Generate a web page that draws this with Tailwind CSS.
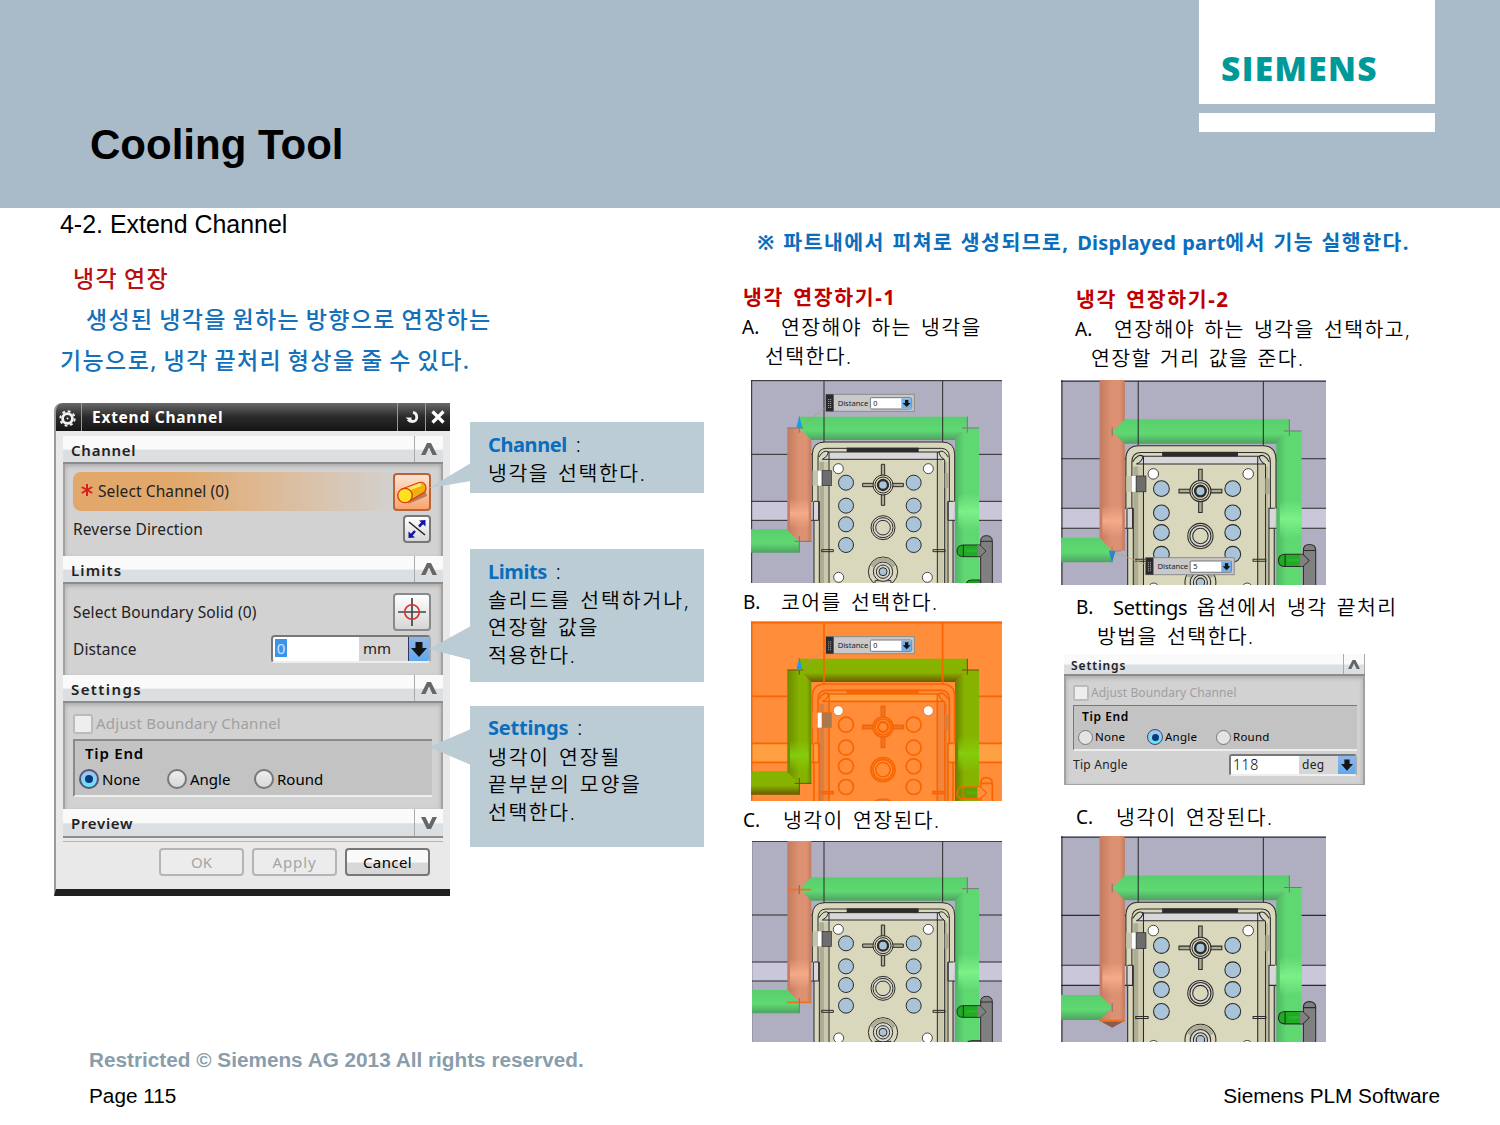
<!DOCTYPE html>
<html lang="ko">
<head>
    <meta charset="UTF-8">
    <meta name="viewport" content="width=device-width, initial-scale=1.0">
    <title>Cooling Tool - Extend Channel</title>
    <script src="https://cdn.jsdelivr.net/npm/@tailwindcss/browser@4"></script>
</head>
<body class="w-[1500px] h-[1125px] overflow-hidden bg-white text-black flex flex-col font-['Noto_Sans','Noto_Sans_CJK_KR',sans-serif]">

    <!-- Header -->
    <header class="h-[208px] shrink-0 bg-[#a9bbc8] flex justify-between pl-[90px] pr-[65px]">
        <h1 class="pt-[121px] text-[42px] leading-[48px] font-bold font-['Liberation_Sans',sans-serif]">Cooling Tool</h1>
        <div class="w-[236px] flex flex-col gap-[9px]">
            <div class="h-[104px] bg-white pl-[22px] pt-[48px] text-[#009999] text-[33.5px] leading-[40px] font-extrabold tracking-[1.35px] font-['Open_Sans',sans-serif] whitespace-nowrap">SIEMENS</div>
            <div class="h-[19px] bg-white"></div>
        </div>
    </header>

    <main class="h-[838px] shrink-0 flex">
        <!-- Left half: description, dialog, callouts -->
        <section class="w-[742px] shrink-0 whitespace-nowrap">
            <h2 class="pl-[60px] h-[34px] leading-[33px] text-[24.95px] font-['Liberation_Sans',sans-serif]">4-2. Extend Channel</h2>
            <p class="mt-[16px] pl-[73px] h-[41px] leading-[41px] text-[23px] tracking-[1.3px] [word-spacing:-1.2px] font-medium text-[#b80f0f]">냉각 연장</p>
            <p class="pl-[86px] h-[41px] leading-[41px] text-[23px] tracking-[1.3px] [word-spacing:-1.4px] font-medium text-[#1470b8]">생성된 냉각을 원하는 방향으로 연장하는</p>
            <p class="pl-[60px] h-[41px] leading-[41px] text-[23px] tracking-[1.4px] [word-spacing:-1.7px] font-medium text-[#1470b8]">기능으로, 냉각 끝처리 형상을 줄 수 있다.</p>

            <div class="mt-[22px] pl-[54px] flex gap-5">
                <!-- Extend Channel dialog -->
                <div class="w-[396px] h-[493px] shrink-0 rounded-tl-lg bg-[#e9e9e9] border-l-2 border-l-[#9a9a9a] border-b-[7px] border-b-[#1f2021] text-[15px] text-[#222] overflow-hidden">
                    <div class="h-[28px] -ml-0.5 rounded-tl-lg bg-linear-to-b from-[#6a6a6a] via-[#2a2a2a] to-[#151515] flex items-center text-white">
                        <div class="w-[28px] h-full flex items-center justify-center border-r border-[#999]">
                            <svg class="w-[17px] h-[17px] mt-0.5" viewBox="0 0 17 17" fill="none" stroke="#f2f2f2">
                                <circle cx="8.5" cy="8.5" r="4.9" stroke-width="2.8"/>
                                <circle cx="8.5" cy="8.5" r="7.2" stroke-width="1.900" stroke-dasharray="2.83 2.83"/>
                                <circle cx="8.5" cy="8.5" r="1" fill="#f2f2f2" stroke="none"/>
                            </svg>
                        </div>
                        <div class="pl-[10px] flex-1 leading-[26px] text-[15.5px] font-bold tracking-[0.75px]">Extend Channel</div>
                        <div class="w-[28px] h-full flex items-center justify-center border-l border-[#999]">
                            <svg class="w-4 h-4" viewBox="0 0 16 16" fill="none" stroke="#f2f2f2"><path d="M9 3.500c5 .8 5 9 0 9-2.500 0-4-.8-5-2" stroke-width="2.800"/><path d="M1.500 8.500h6v5z" fill="#f2f2f2" stroke="none"/></svg>
                        </div>
                        <div class="w-[25px] h-full flex items-center justify-center border-l border-[#999]">
                            <svg class="w-[14px] h-[14px]" viewBox="0 0 14 14" stroke="#fff" stroke-width="3.2"><path d="M1.500 1.500L12.500 12.500M12.500 1.500L1.500 12.500"/></svg>
                        </div>
                    </div>

                    <div class="mt-[5px] ml-[7px] w-[380px]">
                        <!-- Channel -->
                        <div class="h-[28px] border-b-2 border-[#8c8c8c] bg-linear-to-b from-[#fafafa] from-50% to-[#dcdfe1] to-55% flex items-center font-semibold">
                            <span class="pl-[8px] pt-[2px] flex-1 tracking-[0.75px]">Channel</span>
                            <span class="w-[29px] h-full border-l border-[#aaa] flex items-center justify-center"><svg class="w-[16px] h-[12px]" viewBox="0 0 16 12" fill="#666"><path d="M0 12L6 0h4L16 12h-4.500L8 4.500 4.500 12z"/></svg></span>
                        </div>
                        <div class="h-[92px] bg-[#d2d2d2] border-x-2 border-[#a2a2a2] shadow-[inset_0_2px_4px_#aaa] pl-[8px] pr-[10px] pt-[8px]">
                            <div class="h-[39px] flex items-center rounded-l-lg bg-linear-to-r from-[#e2a86b] from-30% to-[#d2d2d2] to-92%">
                                <svg class="ml-[8px] w-[12px] h-[12px] -mt-[4px]" viewBox="0 0 12 12" stroke="#d8201a" stroke-width="2"><path d="M6 0V12M.8 3L11.200 9M11.200 3L.8 9"/></svg>
                                <span class="pl-[5px] flex-1 text-[15.5px] tracking-[0.1px]">Select Channel (0)</span>
                                <span class="w-[38px] h-[38px] rounded-[4px] border-2 border-[#b8633a] bg-linear-to-b from-[#fbe3d3] to-[#f7a56d] flex items-center justify-center">
                                    <svg class="w-[32px] h-[32px]" viewBox="0 0 32 32">
                                        <path d="M12 28L31 20 29 14 20 18z" fill="#b87b5c"/>
                                        <path d="M6 13L23 6.500c4-1 7 1.500 7 5.500 0 3-2 4.500-3 5L12 26z" fill="#f0b010" stroke="#e0390c" stroke-width="1.200"/>
                                        <path d="M11 13.500L25 8.500" stroke="#ffe95e" stroke-width="3"/>
                                        <circle cx="9" cy="19.500" r="7.200" fill="#ffe21f" stroke="#e0390c" stroke-width="1.300"/>
                                    </svg>
                                </span>
                            </div>
                            <div class="mt-[3px] h-[30px] flex items-center justify-between">
                                <span class="pt-[2px] text-[15.5px] tracking-[0.15px]">Reverse Direction</span>
                                <span class="w-[28px] h-[28px] rounded-[4px] border-2 border-[#777] bg-linear-to-b from-white to-[#d8d8d8] flex items-center justify-center">
                                    <svg class="w-[20px] h-[20px]" viewBox="0 0 20 20"><path d="M2 3L18 16" stroke="#222" stroke-width="1.500"/><path d="M12 7.500L16 3.500M4 16.500L8 12" stroke="#1414a8" stroke-width="2.500"/><path d="M18.500 1v6.500L12 1.500zM1.500 19v-6.500l6.500 6z" fill="#1414a8"/></svg>
                                </span>
                            </div>
                        </div>

                        <!-- Limits -->
                        <div class="h-[28px] border-b-2 border-[#8c8c8c] bg-linear-to-b from-[#fafafa] from-50% to-[#dcdfe1] to-55% flex items-center font-semibold">
                            <span class="pl-[8px] pt-[2px] flex-1 tracking-[1.1px]">Limits</span>
                            <span class="w-[29px] h-full border-l border-[#aaa] flex items-center justify-center"><svg class="w-[16px] h-[12px]" viewBox="0 0 16 12" fill="#666"><path d="M0 12L6 0h4L16 12h-4.500L8 4.500 4.500 12z"/></svg></span>
                        </div>
                        <div class="h-[91px] bg-[#d2d2d2] border-x-2 border-[#a2a2a2] shadow-[inset_0_2px_4px_#aaa] pl-[8px] pr-[10px] pt-[9px]">
                            <div class="h-[38px] flex items-center justify-between">
                                <span class="pt-px text-[15.5px] tracking-[0.15px]">Select Boundary Solid (0)</span>
                                <span class="w-[38px] h-[38px] rounded-[4px] border-2 border-[#8a8a8a] bg-linear-to-b from-white to-[#d6d6d6] flex items-center justify-center">
                                    <svg class="w-[28px] h-[28px]" viewBox="0 0 28 28" fill="none"><path d="M14 0V28M0 14H28" stroke="#444" stroke-width="1.700"/><circle cx="14" cy="14" r="7.300" stroke="#d83030" stroke-width="1.600"/></svg>
                                </span>
                            </div>
                            <div class="mt-[4px] h-[28px] flex items-center justify-between">
                                <span class="pt-[2px] text-[15.5px] tracking-[0.1px]">Distance</span>
                                <span class="w-[160px] h-[28px] rounded-[4px] border-2 border-[#777] border-b-[#eee] border-r-[#aaa] flex overflow-hidden">
                                    <span class="w-[86px] bg-white pl-[2px] pt-[2px]"><span class="block w-[12px] h-[18px] bg-[#3b93ea] text-[#cfe4fa] text-[15px] leading-[18px] text-center">0</span></span>
                                    <span class="flex-1 bg-[#d6d6d6] pl-[4px] leading-[23px]">mm</span>
                                    <span class="w-[21px] bg-linear-to-b from-[#8fb6e6] to-[#5ea9ee] border-l border-[#336] flex items-center justify-center"><svg class="w-[16px] h-[15px]" viewBox="0 0 16 15" fill="#151515"><path d="M4.500 0h7v6H16L8 15 0 6h4.500z"/></svg></span>
                                </span>
                            </div>
                        </div>

                        <!-- Settings -->
                        <div class="h-[28px] border-b-2 border-[#8c8c8c] bg-linear-to-b from-[#fafafa] from-50% to-[#dcdfe1] to-55% flex items-center font-semibold">
                            <span class="pl-[8px] pt-[2px] flex-1 tracking-[1.4px]">Settings</span>
                            <span class="w-[29px] h-full border-l border-[#aaa] flex items-center justify-center"><svg class="w-[16px] h-[12px]" viewBox="0 0 16 12" fill="#666"><path d="M0 12L6 0h4L16 12h-4.500L8 4.500 4.500 12z"/></svg></span>
                        </div>
                        <div class="h-[106px] bg-[#d2d2d2] border-x-2 border-[#a2a2a2] shadow-[inset_0_2px_4px_#aaa] pl-[8px] pr-[9px] pt-[10px]">
                            <div class="h-[21px] flex items-center gap-[3px] text-[#a0a0a0]">
                                <span class="w-[20px] h-[20px] rounded-[3px] border-2 border-[#bbb] bg-[#eee]"></span>
                                <span class="tracking-[0.25px]">Adjust Boundary Channel</span>
                            </div>
                            <div class="mt-[5px] h-[58px] bg-[#c3c3c3] border-t-2 border-l-2 border-[#8a8a8a] border-b-2 border-b-[#eee] pl-[10px] pt-px text-black">
                                <div class="leading-[22px] font-semibold tracking-[0.8px]">Tip End</div>
                                <div class="-ml-[6px] mt-[3px] flex items-center leading-[24px]">
                                    <span class="w-[88px] flex items-center gap-[3px]"><span class="w-[20px] h-[20px] rounded-full border-2 border-[#557] bg-linear-to-b from-[#9fc4ee] to-[#62e4f6] flex items-center justify-center"><span class="w-2 h-2 rounded-full bg-[#063a7c]"></span></span>None</span>
                                    <span class="w-[87px] flex items-center gap-[3px]"><span class="w-[20px] h-[20px] rounded-full border-2 border-[#777] bg-linear-to-b from-[#eee] to-[#d8d8d8]"></span>Angle</span>
                                    <span class="flex items-center gap-[3px]"><span class="w-[20px] h-[20px] rounded-full border-2 border-[#777] bg-linear-to-b from-[#eee] to-[#d8d8d8]"></span>Round</span>
                                </div>
                            </div>
                        </div>

                        <!-- Preview -->
                        <div class="h-[29px] border-b-2 border-[#8c8c8c] bg-linear-to-b from-[#fafafa] from-50% to-[#dcdfe1] to-55% flex items-center font-semibold">
                            <span class="pl-[8px] pt-px flex-1 tracking-[0.7px]">Preview</span>
                            <span class="w-[29px] h-full border-l border-[#aaa] flex items-center justify-center"><svg class="w-[16px] h-[12px]" viewBox="0 0 16 12" fill="#666"><path d="M0 0L6 12h4L16 0h-4.500L8 7.500 4.500 0z"/></svg></span>
                        </div>
                        <div class="mt-[3px] border-t border-[#b5b5b5]"></div>
                        <div class="mt-[6px] pr-[13px] flex justify-end gap-[8px] text-center leading-[24px]">
                            <span class="w-[85px] h-[28px] rounded-[4px] border-2 border-[#b5b5b5] bg-[#ececec] text-[#a5a5a5]">OK</span>
                            <span class="w-[85px] h-[28px] rounded-[4px] border-2 border-[#b5b5b5] bg-[#ececec] text-[#a5a5a5] tracking-[0.9px]">Apply</span>
                            <span class="w-[85px] h-[28px] rounded-[4px] border-2 border-[#777] bg-linear-to-b from-[#fafafa] from-50% to-[#d8d8d8] to-55% text-black tracking-[0.4px]">Cancel</span>
                        </div>
                    </div>
                </div>

                <!-- Callouts -->
                <div class="w-[234px] pt-[19px] text-[20.5px] leading-[28px] tracking-[1.55px] [word-spacing:2px]">
                    <div class="relative h-[71px] bg-[#bbccd5] pl-[18px] pt-[8px]">
                        <svg class="absolute -left-[41px] top-[41px] w-[42px] h-[26px]" viewBox="0 0 42 26" fill="#bbccd5"><path d="M42 0V18L0 25z"/></svg>
                        <p><b class="text-[20px] text-[#0a6ebd] tracking-[-0.4px]">Channel</b><span class="font-light"> :</span></p>
                        <p class="font-[350]">냉각을 선택한다.</p>
                    </div>
                    <div class="relative mt-[56px] h-[133px] bg-[#bbccd5] pl-[18px] pt-[8px]">
                        <svg class="absolute -left-[41px] top-[77px] w-[42px] h-[34px]" viewBox="0 0 42 34" fill="#bbccd5"><path d="M42 0V34L0 23z"/></svg>
                        <p><b class="text-[20px] text-[#0a6ebd] tracking-[-0.4px]">Limits</b><span class="font-light"> :</span></p>
                        <p class="tracking-[1.9px] font-[350]">솔리드를 선택하거나,</p>
                        <p class="font-[350] leading-[27px]">연장할 값을</p>
                        <p class="font-[350] leading-[29px]">적용한다.</p>
                    </div>
                    <div class="relative mt-[24px] h-[141px] bg-[#bbccd5] pl-[18px] pt-[7px]">
                        <svg class="absolute -left-[41px] top-[23px] w-[42px] h-[36px]" viewBox="0 0 42 36" fill="#bbccd5"><path d="M42 0V36L0 18z"/></svg>
                        <p><b class="text-[20px] text-[#0a6ebd] tracking-[-0.2px]">Settings</b><span class="font-light"> :</span></p>
                        <p class="pt-px tracking-[1.8px] font-[350]">냉각이 연장될</p>
                        <p class="tracking-[1.8px] font-[350] leading-[27px]">끝부분의 모양을</p>
                        <p class="font-[350]">선택한다.</p>
                    </div>
                </div>
            </div>
        </section>

        <!-- Right half: step by step -->
        <section class="flex-1 whitespace-nowrap text-[20.5px] tracking-[1.4px] [word-spacing:2.5px]">
            <p class="mt-[19px] pl-[15px] h-[30px] leading-[30px] font-bold text-[#0a6ebd] tracking-[1.45px] [word-spacing:0.7px]">※ 파트내에서 피쳐로 생성되므로, <span class="text-[20px] tracking-[0.2px]">Displayed part</span>에서 기능 실행한다.</p>

            <div class="flex">
                <div class="w-[319px] shrink-0 pt-[25px] font-[350]">
                    <h3 class="h-[30px] leading-[30px] pl-px tracking-[1.6px] font-bold text-[#c00000]">냉각 연장하기-1</h3>
                    <p class="h-[30px] leading-[30px] flex"><span class="w-[39px] text-[19px] tracking-[0px] font-normal">A.</span>연장해야 하는 냉각을</p>
                    <p class="h-[28px] leading-[28px] pl-[23px]">선택한다.</p>
                    <svg id="step1a" class="mt-[10px] ml-[9px] w-[251px] h-[203px] block"></svg>
                    <p class="mt-[4px] pl-px h-[30px] leading-[30px] flex"><span class="w-[38px] text-[19px] tracking-[0px] font-normal">B.</span>코어를 선택한다.</p>
                    <svg id="step1b" class="mt-[4px] ml-[9px] w-[251px] h-[180px] block"></svg>
                    <p class="mt-[4px] pl-px h-[30px] leading-[30px] flex"><span class="w-[40px] text-[19px] tracking-[0px] font-normal">C.</span>냉각이 연장된다.</p>
                    <svg id="step1c" class="mt-[6px] ml-[10px] w-[250px] h-[201px] block"></svg>
                </div>

                <div class="pt-[27px] font-[350]">
                    <h3 class="h-[30px] leading-[30px] pl-[15px] tracking-[1.6px] font-bold text-[#c00000]">냉각 연장하기-2</h3>
                    <p class="h-[30px] leading-[30px] pl-[14px] flex"><span class="w-[39px] text-[19px] tracking-[0px] font-normal">A.</span>연장해야 하는 냉각을 선택하고,</p>
                    <p class="h-[28px] leading-[28px] pl-[30px] [word-spacing:1.5px]">연장할 거리 값을 준다.</p>
                    <svg id="step2a" class="mt-[8px] w-[265px] h-[205px] block"></svg>
                    <p class="mt-[8px] h-[29px] leading-[29px] pl-[15px] flex"><span class="w-[37px] text-[19px] tracking-[0px] font-normal">B.</span><span><span class="text-[20px] tracking-[-0.2px] font-normal">Settings</span> 옵션에서 냉각 끝처리</span></p>
                    <p class="h-[29px] leading-[29px] pl-[36px]">방법을 선택한다.</p>

                    <!-- Settings group -->
                    <div class="mt-[3px] ml-[3px] w-[301px] h-[132px] text-[12px] tracking-[0.25px] [word-spacing:0] font-normal text-[#222]">
                        <div class="h-[22px] border-b-2 border-[#8c8c8c] bg-linear-to-b from-[#fafafa] from-50% to-[#dcdfe1] to-55% flex items-center font-semibold">
                            <span class="pl-[7px] pt-[3px] flex-1 tracking-[0.95px]">Settings</span>
                            <span class="w-[22px] h-full border-l border-r border-[#aaa] flex items-center justify-center"><svg class="w-3 h-[9px]" viewBox="0 0 16 12" fill="#666"><path d="M0 12L6 0h4L16 12h-4.500L8 4.500 4.500 12z"/></svg></span>
                        </div>
                        <div class="h-[109px] bg-[#d2d2d2] border-x-2 border-b border-[#a2a2a2] shadow-[inset_0_2px_4px_#aaa] pl-[7px] pr-[6px] pt-[9px]">
                            <div class="h-[16px] flex items-center gap-[2px] text-[#a0a0a0]">
                                <span class="w-[16px] h-[16px] rounded-[2px] border-2 border-[#bbb] bg-[#eee]"></span>
                                <span class="tracking-[0.1px]">Adjust Boundary Channel</span>
                            </div>
                            <div class="mt-[4px] h-[46px] bg-[#c3c3c3] border-t border-l border-[#777] border-b-2 border-b-[#eee] pl-[8px] pt-[2px] text-black">
                                <div class="leading-[18px] font-semibold tracking-[0.6px]">Tip End</div>
                                <div class="-ml-[4px] mt-[1px] flex items-center leading-[20px] text-[11.5px]">
                                    <span class="w-[69px] flex items-center gap-[2px]"><span class="w-[15px] h-[15px] rounded-full border border-[#777] bg-[#e4e4e4]"></span>None</span>
                                    <span class="w-[69px] flex items-center gap-[2px]"><span class="w-[16px] h-[16px] rounded-full border border-[#446] bg-linear-to-b from-[#9fc4ee] to-[#62e4f6] flex items-center justify-center"><span class="w-[7px] h-[7px] rounded-full bg-[#063a7c]"></span></span>Angle</span>
                                    <span class="flex items-center gap-[2px]"><span class="w-[15px] h-[15px] rounded-full border border-[#777] bg-[#e4e4e4]"></span>Round</span>
                                </div>
                            </div>
                            <div class="mt-[3px] h-[22px] flex items-center justify-between">
                                <span>Tip Angle</span>
                                <span class="w-[128px] h-[22px] rounded-[3px] border-2 border-[#777] border-b-[#eee] border-r-[#aaa] flex overflow-hidden leading-[18px]">
                                    <span class="w-[68px] bg-white pl-[2px] text-[14px] font-light tracking-[0.6px] leading-[17px] text-black">118</span>
                                    <span class="flex-1 bg-[#d6d6d6] pl-[3px]">deg</span>
                                    <span class="w-[17px] bg-linear-to-b from-[#8fb6e6] to-[#5ea9ee] flex items-center justify-center"><svg class="w-[12px] h-[12px]" viewBox="0 0 16 15" fill="#151515"><path d="M4.500 0h7v6H16L8 15 0 6h4.500z"/></svg></span>
                                </span>
                            </div>
                        </div>
                    </div>

                    <p class="mt-[16px] h-[30px] leading-[30px] pl-[15px] flex"><span class="w-[40px] text-[19px] tracking-[0px] font-normal">C.</span>냉각이 연장된다.</p>
                    <svg id="step2c" class="mt-[4px] w-[265px] h-[206px] block"></svg>
                </div>
            </div>
        </section>
    </main>

    <!-- Footer -->
    <footer class="flex-1 pl-[89px] pr-[60px] text-[20.75px] font-['Liberation_Sans',sans-serif]">
        <p class="h-[28px] leading-[28px] font-bold text-[#8a9dab]">Restricted © Siemens AG 2013 All rights reserved.</p>
        <p class="mt-[8px] h-[28px] leading-[28px] flex justify-between"><span>Page 115</span><span>Siemens PLM Software</span></p>
    </footer>

    <script>
        const normal = {
            bg: '#b0afc1', band: '#cac7da', line: '#2b2b2b', thin: 3,
            core: '#d9d8bc', shade: '#aeac92', strip: '#d8d8da', hole: '#a9c4d8', dark: '#2b2b2b',
            green: ['#58cf6c', '#5fd872', '#4fa162'], right: ['#4fb763', '#5fd872', '#7df088'],
            coral: ['#c47a5e', '#dc9272', '#f5ab88'], clamp: '#6d6d6d', clampSoft: '#c2bfa6',
            pin: '#808080', pinGreen: '#17a517', tick: '#777'
        };
        const picked = {
            bg: '#ff8d3a', band: '#ffa143', line: '#f96502', thin: 5,
            core: '#ff8d3a', shade: '#d87f42', strip: '#ffa143', hole: 'none', dark: '#f96502',
            green: ['#86b300', '#86b300', '#6b5a00'], right: ['#6b7d00', '#86b300', '#85cc0c'],
            coral: ['#6b8a00', '#86b300', '#85cc0c'], clamp: '#a87850', clampSoft: '#ff8d3a',
            pin: '#ff8d3a', pinGreen: '#5d9c00', tick: '#7a4a00'
        };

        // the five views share one mould plate, only colours and the extended channel differ
        function plate(id, c, channel) {
            const holes = [338, 407, 463, 525].map(y =>
                `<circle cx="318" cy="${y}" r="22.5"/><circle cx="521" cy="${y}" r="22.5"/>`).join('');
            const extended = channel !== 'short';
            return `
                <defs>
                    <linearGradient id="${id}-h" x2="0" y2="1"><stop offset="0" stop-color="${c.green[0]}"/><stop offset=".6" stop-color="${c.green[1]}"/><stop offset="1" stop-color="${c.green[2]}"/></linearGradient>
                    <linearGradient id="${id}-r"><stop offset="0" stop-color="${c.right[0]}"/><stop offset=".4" stop-color="${c.right[1]}"/><stop offset="1" stop-color="${c.right[1]}"/></linearGradient>
                    <linearGradient id="${id}-c"><stop offset="0" stop-color="${c.coral[0]}"/><stop offset=".5" stop-color="${c.coral[1]}"/><stop offset=".8" stop-color="${c.coral[1]}"/><stop offset="1" stop-color="${c.coral[0]}"/></linearGradient>
                    <linearGradient id="${id}-g" x2="0" y2="1"><stop offset="0" stop-color="${c.right[2]}" stop-opacity="0"/><stop offset=".5" stop-color="${c.right[2]}"/><stop offset="1" stop-color="${c.right[2]}" stop-opacity="0"/></linearGradient>
                    <linearGradient id="${id}-o" x2="0" y2="1"><stop offset="0" stop-color="${c.coral[2]}" stop-opacity="0"/><stop offset=".5" stop-color="${c.coral[2]}"/><stop offset="1" stop-color="${c.coral[2]}" stop-opacity="0"/></linearGradient>
                </defs>
                <rect x="30" y="28" width="770" height="630" fill="${c.bg}"/>
                <rect x="30" y="394" width="770" height="57" fill="${c.band}"/>
                <path d="M35 28V650M30 32H800M30 253H800M30 394H800M30 451H800" stroke="${c.line}" stroke-width="${c.thin}" fill="none"/>
                <path d="M30 478H143L178 513V548H30z" fill="url(#${id}-h)"/>
                <path d="${extended ? 'M142 28H214V515H178L142 478z' : 'M142 174H178L214 210V515H178L142 480z'}" fill="url(#${id}-c)"/>
                <rect x="150" y="385" width="56" height="90" fill="url(#${id}-o)"/>
                <path d="M645 210L682 174H717V650H645z" fill="url(#${id}-r)"/>
                <rect x="655" y="370" width="62" height="110" fill="url(#${id}-g)"/>
                <path d="${extended ? 'M214 140H682V174L645 210H214L180 176z' : 'M178 140H682V174L645 210H214L178 174z'}" fill="url(#${id}-h)"/>
                <path d="M252 32V216M608 32V216" stroke="${c.line}" stroke-width="${c.thin}"/>
                <path d="M682 140V188M666 174H717" stroke="${c.tick}" stroke-width="3"/>
                ${extended ? `<path d="M178 163V188" stroke="#777" stroke-width="3"/>`
                           : `<path d="M142 174H190M178 140V188M178 498V548M164 514H214" stroke="${c.tick}" stroke-width="3"/>`}
                ${channel === 'long' ? `<path d="M142 177H214M142 515H214" stroke="#f0701c" stroke-width="5"/><path d="M178 165V190M178 502V548" stroke="#777" stroke-width="3"/>` : ''}
                ${channel === 'tip' ? `<path d="M142 551H214L178 571z" fill="#8d5a50"/><rect x="142" y="480" width="72" height="70" fill="url(#${id}-c)"/><path d="M30 478H142L178 513 142 549H30z" fill="url(#${id}-h)"/><path d="M178 502V526" stroke="#777" stroke-width="3"/><path d="M142 551H214" stroke="#f0701c" stroke-width="6"/>` : ''}

                <path d="M217 394V254Q217 216 255 216H606Q644 216 644 254V394L639 451V650H222V451z" fill="${c.core}"/>
                <path d="M218 394H234L238 451H220zM624 394H641L638 451H622z" fill="${c.strip}"/>
                <rect x="238" y="275" width="14" height="380" fill="${c.shade}"/>
                <rect x="252" y="275" width="14" height="380" fill="${c.shade}" opacity=".35"/>
                <path d="M592 270H610V650H592z" fill="${c.shade}" opacity=".35"/><path d="M614 275H622V650H614z" fill="${c.shade}" opacity=".7"/>
                <path d="M262 246H600L612 268H247z" fill="${c.strip}"/>
                <g fill="none" stroke="${c.line}" stroke-width="${c.thin}">
                    <path d="M217 394V254Q217 216 255 216H606Q644 216 644 254V394M222 650V451M639 650V451"/>
                    <path d="M234 394V262Q234 236 258 235H604Q628 236 628 262V394M247 268H612M262 246H600"/>
                    <path d="M238 394V650M267 246V650M592 246V650M614 268V650M624 394V650M220 394V451M222 394L236 394 236 451H222M641 394H624V451H639"/>
                    <path d="M236 262Q252 236 266 246Q262 262 247 268M625 262Q610 236 596 246Q600 262 612 268"/>
                    <path d="M245 539H280V545H245zM579 539H615V545H579z"/>
                </g>
                <rect x="320" y="233" width="216" height="13" fill="${c.dark}"/>
                <rect x="217" y="302" width="16" height="45" fill="${c.clampSoft}" opacity=".8"/>
                <rect x="233" y="302" width="13" height="45" fill="#fff"/>
                <rect x="246" y="302" width="28" height="45" fill="${c.clamp}" stroke="${c.line}" stroke-width="2"/>
                <rect x="615" y="310" width="10" height="43" fill="${c.shade}" stroke="${c.shade}" stroke-width="2"/>
                <g fill="#fff" stroke="${c.line}" stroke-width="2.5"><circle cx="295" cy="296" r="15"/><circle cx="565" cy="296" r="15"/><circle cx="296" cy="622" r="15"/><circle cx="562" cy="622" r="15"/></g>
                <g fill="${c.hole}" stroke="${c.line}" stroke-width="${c.thin}">${holes}</g>
                <g fill="${c.core}" stroke="${c.line}" stroke-width="${c.thin}">
                    <path d="M424 283H434V406H424zM368 340H490V350H368z" fill="${c.shade}"/>
                    <circle cx="429" cy="345" r="30"/><circle cx="429" cy="345" r="24"/>
                    <circle cx="429" cy="345" r="15" fill="${c.hole}" stroke-width="7"/>
                    <circle cx="429" cy="473" r="36"/><circle cx="429" cy="473" r="30" fill="${c.strip}"/><circle cx="429" cy="473" r="22"/>
                    <circle cx="429" cy="605" r="44"/><path d="M405 650V632H453V650"/>
                    <circle cx="429" cy="605" r="29" fill="${c.strip}"/><circle cx="429" cy="605" r="20"/><circle cx="429" cy="605" r="12" fill="${c.hole}"/>
                </g>
                <path d="M396 590Q408 568 429 568Q450 568 462 590" fill="none" stroke="${c.shade}" stroke-width="11"/>
                <g stroke="${c.line}" stroke-width="${c.thin}" fill="${c.pin}">
                    <path d="M722 650V514Q722 497 739 497Q757 497 757 514V650zM722 514H757"/>
                    <path d="M668 525Q651 527 651 543Q651 559 668 560H720L738 543 720 525z" fill="${c.pinGreen}" fill-opacity=".85"/>
                    <path d="M712 526H720L737 543 720 559H712z" stroke="none"/><path d="M670 525V560"/>
                    <path d="M678 640Q682 630 694 630H722V650H678z" fill="${c.pinGreen}"/>
                </g>
                <path d="M680 542H710" stroke="#3fd23f" stroke-width="8" opacity=".3"/>`;
        }

        // floating Distance input
        function tag(x, y, value) {
            return `<g transform="translate(${x} ${y})">
                <rect width="266" height="51" fill="#c9c9cb" stroke="#8c8c8c" stroke-width="3"/>
                <rect x="1" width="23" height="51" fill="#2a2a2a"/>
                <path d="M9 14V44M15 14V44" stroke="#aaa" stroke-width="3" stroke-dasharray="3 3"/>
                <text x="36" y="35" font-size="23" fill="#222" textLength="92" font-family="Noto Sans, sans-serif" letter-spacing="0" word-spacing="0" font-weight="400">Distance</text>
                <rect x="134" y="10" width="124" height="34" rx="4" fill="#fff" stroke="#777" stroke-width="3"/>
                <text x="143" y="35" font-size="22" fill="#222" font-family="Noto Sans, sans-serif" font-weight="400">${value}</text>
                <rect x="227" y="12" width="30" height="31" fill="#76b0ea"/>
                <path d="M238 17H248V26H255L243 38 231 26H238z" fill="#151515"/>
            </g>`;
        }

        function draw(id, viewBox, content) {
            const svg = document.getElementById(id);
            svg.setAttribute('viewBox', viewBox);
            svg.setAttribute('preserveAspectRatio', 'none');
            svg.innerHTML = content;
        }

        const arrowUp = '<path d="M178 174L256 112" stroke="#a89878" stroke-width="2"/><path d="M178 138L187 174H169z" fill="#1b9be6"/>';

        draw('step1a', '33 30 753 609', plate('p1', normal, 'short') + arrowUp + tag(257, 73, '0'));
        draw('step1b', '33 27 753 540', plate('p2', picked, 'short') + arrowUp + tag(257, 74, '0'));
        draw('step1c', '36 31 750 603', plate('p3', normal, 'long'));
        draw('step2a', '34 30 794 615', `<g transform="scale(1.053)">${plate('p4', normal, 'plain')}</g>
            <path d="M188 545L290 584" stroke="#b8a070" stroke-width="2"/><path d="M178 543H197L187 579z" fill="#1b88d6"/>` + tag(287, 563, '5') +
            '<path d="M178 543H214M187 530V560" stroke="#777" stroke-width="2"/>');
        draw('step2c', '34 30 794 618', `<g transform="scale(1.053 1.06)">${plate('p5', normal, 'tip')}</g>`);
    </script>
</body>
</html>
